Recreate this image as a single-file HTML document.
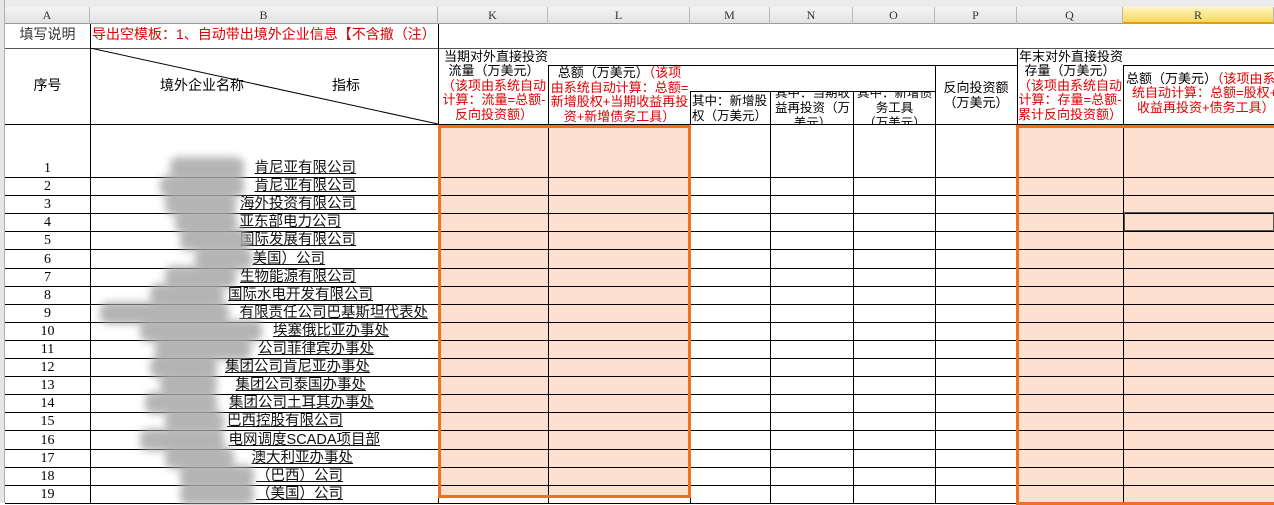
<!DOCTYPE html>
<html><head><meta charset="utf-8"><style>
*{margin:0;padding:0;box-sizing:border-box}
body{width:1274px;height:503px;overflow:hidden;background:#fff;position:relative;font-family:"Liberation Sans","Noto Sans CJK SC","WenQuanYi Zen Hei",sans-serif;color:#000}
.a{position:absolute}
.h{position:absolute;height:1px;background:#000}
.v{position:absolute;width:1px;background:#000}
.col{position:absolute;top:7px;height:17px;background:linear-gradient(#f4f4f4,#e2e2e2);border-right:1px solid #b8b8b8;border-bottom:1px solid #9a9a9a;font-family:"Liberation Serif",serif;font-size:12px;text-align:center;line-height:16px;color:#333}
.t{position:absolute;font-size:13px;line-height:14.5px;text-align:center;white-space:nowrap}
.r{color:#e00000}
.num{position:absolute;left:5px;width:85px;text-align:center;font-family:"Liberation Serif",serif;font-size:14px;line-height:14px}
.nm{position:absolute;font-size:14.5px;line-height:16px;text-decoration:underline;white-space:nowrap;text-align:right;color:#111}
.blob{position:absolute;background:#a8a8a8;filter:blur(4px);border-radius:8px;opacity:.85}
.fill{position:absolute;background:#fde0d0}
.ob{position:absolute;border:3px solid #f07020}
</style></head><body>
<div class="a" style="left:0;top:0;width:1274px;height:7px;background:#ececec"></div>
<div class="a" style="left:0;top:0;width:5px;height:503px;background:#e6e6e6;border-right:1px solid #b0b0b0"></div>
<div class="col" style="left:5px;width:85px">A</div>
<div class="col" style="left:90px;width:348px">B</div>
<div class="col" style="left:438px;width:110px">K</div>
<div class="col" style="left:548px;width:142px">L</div>
<div class="col" style="left:690px;width:80px">M</div>
<div class="col" style="left:770px;width:83px">N</div>
<div class="col" style="left:853px;width:82px">O</div>
<div class="col" style="left:935px;width:82px">P</div>
<div class="col" style="left:1017px;width:106px">Q</div>
<div class="col" style="left:1123px;width:151px;background:linear-gradient(#fff6c0,#f6d860);border-bottom:2px solid #e0a000">R</div>

<div class="fill" style="left:438px;top:125px;width:252px;height:372px"></div>
<div class="fill" style="left:1017px;top:125px;width:257px;height:378px"></div>

<div class="t" style="left:5px;top:27px;width:85px;font-size:14px;color:#333">填写说明</div>
<div class="t r" style="left:92px;top:27px;font-size:14px;text-align:left;width:345px;overflow:hidden">导出空模板：1、自动带出境外企业信息【不含撤（注）</div>
<div class="h" style="left:5px;top:48px;width:1269px;background:#555"></div>
<div class="v" style="left:90px;top:24px;height:479px"></div>
<div class="v" style="left:438px;top:24px;height:479px"></div>

<div class="t" style="left:5px;top:78px;width:85px;font-size:14px">序号</div>
<div class="t" style="left:160px;top:78px;font-size:14px">境外企业名称</div>
<div class="t" style="left:332px;top:78px;font-size:14px">指标</div>
<svg class="a" style="left:90px;top:48px" width="348" height="77"><line x1="0" y1="0" x2="348" y2="76" stroke="#000" stroke-width="1"/></svg>

<div class="t" style="left:444px;top:50px;text-align:left">当期对外直接投资</div>
<div class="t" style="left:439px;top:64px;width:110px">流量（万美元）<br><span class="r">（该项由系统自动<br>计算：流量=总额-<br>反向投资额）</span></div>
<div class="h" style="left:548px;top:65px;width:469px"></div>
<div class="t" style="left:549px;top:66px;width:141px">总额（万美元）<span class="r">（该项<br>由系统自动计算：总额=<br>新增股权+当期收益再投<br>资+新增债务工具）</span></div>
<div class="h" style="left:690px;top:91px;width:245px"></div>
<div class="t" style="left:692px;top:94px;width:78px;text-align:left;line-height:15px;font-size:12.5px">其中：新增股<br>权（万美元）</div>
<div class="a" style="left:771px;top:92px;width:82px;height:32px;overflow:hidden"><div class="t" style="left:1px;top:-6px;width:81px;line-height:15px;font-size:12.5px">其中：当期收<br>益再投资（万<br>美元）</div></div>
<div class="a" style="left:854px;top:92px;width:81px;height:32px;overflow:hidden"><div class="t" style="left:0;top:-6px;width:81px;line-height:15px;font-size:12.5px">其中：新增债<br>务工具<br>（万美元）</div></div>
<div class="t" style="left:935px;top:80px;width:82px;line-height:15px">反向投资额<br>（万美元）</div>
<div class="t" style="left:1019px;top:50px;text-align:left">年末对外直接投资</div>
<div class="t" style="left:1017px;top:64px;width:106px">存量（万美元）<br><span class="r">（该项由系统自动<br>计算：存量=总额-<br>累计反向投资额）</span></div>
<div class="h" style="left:1123px;top:65px;width:151px"></div>
<div class="t" style="left:1126px;top:72px;text-align:left">总额（万美元）<span class="r">（该项由系</span></div>
<div class="t r" style="left:1132px;top:86px;text-align:left">统自动计算：总额=股权+</div>
<div class="t r" style="left:1137px;top:101px;text-align:left">收益再投资+债务工具）</div>

<div class="v" style="left:548px;top:65px;height:438px"></div>
<div class="v" style="left:690px;top:91px;height:412px"></div>
<div class="v" style="left:770px;top:91px;height:412px"></div>
<div class="v" style="left:853px;top:91px;height:412px"></div>
<div class="v" style="left:935px;top:65px;height:438px"></div>
<div class="v" style="left:1017px;top:48px;height:455px"></div>
<div class="v" style="left:1123px;top:65px;height:438px"></div>
<div class="h" style="left:5px;top:124px;width:1269px"></div>

<div id="rows"></div>
<script>
var ends=[356,356,356,341,356,325,356,373,428,389,374,370,366,374,343,380,353,343,343];
var names=["肯尼亚有限公司","肯尼亚有限公司","海外投资有限公司","亚东部电力公司","国际发展有限公司","美国）公司","生物能源有限公司","国际水电开发有限公司","有限责任公司巴基斯坦代表处","埃塞俄比亚办事处","公司菲律宾办事处","集团公司肯尼亚办事处","集团公司泰国办事处","集团公司土耳其办事处","巴西控股有限公司","电网调度SCADA项目部","澳大利亚办事处","（巴西）公司","（美国）公司"];
var blobs=[[170,240],[160,240],[165,232],[175,233],[180,245],[195,248],[165,232],[150,220],[100,225],[140,258],[155,247],[150,213],[160,213],[145,213],[165,220],[140,220],[165,230],[180,250],[180,250]];
var h="";
for(var i=0;i<19;i++){
 var bot=177+i*18.1;
 h+='<div class="h" style="left:5px;top:'+Math.round(bot)+'px;width:1269px"></div>';
 h+='<div class="num" style="top:'+Math.round(bot-15)+'px">'+(i+1)+'</div>';
 h+='<div class="nm" style="right:'+(1274-ends[i])+'px;top:'+Math.round(bot-17)+'px">'+names[i]+'</div>';
 h+='<div class="blob" style="left:'+blobs[i][0]+'px;top:'+Math.round(bot-20)+'px;width:'+(blobs[i][1]-blobs[i][0]+4)+'px;height:22px"></div>';
}
document.getElementById('rows').innerHTML=h;
</script>
<div class="ob" style="left:438px;top:125px;width:253px;height:373px"></div>
<div class="ob" style="left:1016px;top:125px;width:262px;height:380px"></div>
<div class="a" style="left:1124px;top:212px;width:150px;height:19px;border:1px solid #555"></div>
</body></html>
